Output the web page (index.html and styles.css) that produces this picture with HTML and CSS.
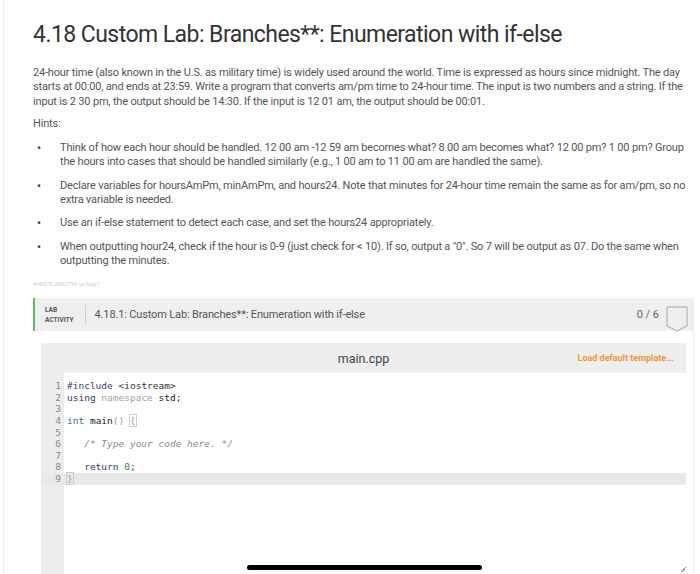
FILE: index.html
```html
<!DOCTYPE html>
<html lang="en">
<head>
<meta charset="utf-8">
<title>4.18 Custom Lab</title>
<link rel="stylesheet" href="styles.css">
</head>
<body>
<div class="page">
  <h1 class="title">4.18 Custom Lab: Branches**: Enumeration with if-else</h1>
  <p class="desc">24-hour time (also known in the U.S. as military time) is widely used around the world. Time is expressed as hours since midnight. The day starts at 00:00, and ends at 23:59. Write a program that converts am/pm time to 24-hour time. The input is two numbers and a string. If the input is 2 30 pm, the output should be 14:30. If the input is 12 01 am, the output should be 00:01.</p>
  <p class="hints">Hints:</p>
  <ul class="hint-list">
    <li>Think of how each hour should be handled. 12 00 am -12 59 am becomes what? 8 00 am becomes what? 12 00 pm? 1 00 pm? Group the hours into cases that should be handled similarly (e.g., 1 00 am to 11 00 am are handled the same).</li>
    <li>Declare variables for hoursAmPm, minAmPm, and hours24. Note that minutes for 24-hour time remain the same as for am/pm, so no extra variable is needed.</li>
    <li>Use an if-else statement to detect each case, and set the hours24 appropriately.</li>
    <li>When outputting hour24, check if the hour is 0-9 (just check for &lt; 10). If so, output a "0". So 7 will be output as 07. Do the same when outputting the minutes.</li>
  </ul>
  <div class="ref">448478.3062798.qx3zqy7</div>
  <section class="lab">
    <header class="lab-bar">
      <div class="lab-label">LAB<br>ACTIVITY</div>
      <div class="lab-title">4.18.1: Custom Lab: Branches**: Enumeration with if-else</div>
      <div class="lab-score">0 / 6</div>
      <svg class="badge" width="22" height="26" viewBox="0 0 22 26"><path d="M1 1 H21 V20 L11 25 L1 20 Z" fill="none" stroke="#a8a8a8" stroke-width="1"/></svg>
    </header>
    <div class="lab-body">
      <div class="editor">
        <div class="editor-head">
          <span class="file">main.cpp</span>
          <span class="load">Load default template...</span>
        </div>
        <div class="code">
          <div class="line"><span class="ln">1</span><span class="src"><span class="t-pre">#include</span> <span class="t-inc">&lt;iostream&gt;</span></span></div>
          <div class="line"><span class="ln">2</span><span class="src"><span class="t-kw">using</span> <span class="t-ns">namespace</span> <span class="t-id">std</span>;</span></div>
          <div class="line"><span class="ln">3</span><span class="src"></span></div>
          <div class="line"><span class="ln">4</span><span class="src"><span class="t-type">int</span> <span class="t-id">main</span><span class="t-paren">()</span> <span class="t-brace">{</span></span></div>
          <div class="line"><span class="ln">5</span><span class="src"></span></div>
          <div class="line"><span class="ln">6</span><span class="src">   <span class="t-cm">/* Type your code here. */</span></span></div>
          <div class="line"><span class="ln">7</span><span class="src"></span></div>
          <div class="line"><span class="ln">8</span><span class="src">   <span class="t-kw">return</span> <span class="t-num">0</span>;</span></div>
          <div class="line active"><span class="ln">9</span><span class="src"><span class="t-brace">}</span></span></div>
          <div class="filler"></div>
        </div>
      </div>
    </div>
  </section>
</div>
<div class="home-bar"></div>
<div class="grip"></div>
</body>
</html>
```
FILE: styles.css
```css
html, body {
  margin: 0;
  padding: 0;
  background: #ffffff;
  height: 100%;
  overflow: hidden;
}

body {
  font-family: Roboto, "Liberation Sans", sans-serif;
  color: #555;
}

.page {
  margin-left: 3px;
  border-left: 1px solid #ececec;
  padding: 0 6px 0 29px;
  min-height: 100%;
  box-sizing: border-box;
}

.title {
  margin: 0;
  padding-top: 21px;
  font-size: 23px;
  line-height: 28px;
  font-weight: 400;
  color: #333;
  letter-spacing: -0.55px;
}

.desc,
.hints,
.hint-list {
  font-size: 11px;
  line-height: 14.3px;
  color: #555;
  letter-spacing: -0.18px;
}

.desc {
  margin: 17px 0 0;
}

.hints {
  margin: 8px 0 0;
}

.hint-list {
  margin: 10px 0 0;
  padding-left: 0;
  list-style: none;
}

.hint-list li {
  display: flex;
  margin-bottom: 9px;
}

.hint-list li::before {
  content: "\2022";
  flex: none;
  width: 27px;
  padding-left: 4px;
  box-sizing: border-box;
  font-size: 12px;
  color: #444;
}

.ref {
  margin-top: 12px;
  font-size: 6px;
  line-height: 8px;
  color: #cfcfcf;
  letter-spacing: -0.1px;
}

.lab {
  margin-top: 10px;
  border-right: 1px solid #ececec;
}

.lab-bar {
  display: flex;
  align-items: center;
  height: 33px;
  background: #efefef;
  border-left: 2px solid #62b864;
  padding-left: 10px;
  padding-right: 5px;
}

.lab-label {
  font-size: 6.5px;
  line-height: 10px;
  font-weight: 700;
  color: #555;
  padding-right: 11px;
  border-right: 1px solid #cfcfcf;
  height: 20px;
  display: flex;
  flex-direction: column;
  justify-content: center;
  margin-right: 9px;
}

.lab-title {
  flex: 1;
  font-size: 11px;
  color: #555;
  letter-spacing: -0.15px;
}

.lab-score {
  font-size: 11px;
  color: #666;
  margin-right: 7px;
}

.badge {
  display: block;
  margin-top: 8px;
}

.lab-body {
  padding: 12px 7px 0 8px;
}

.editor {
  background: #fff;
}

.editor-head {
  position: relative;
  height: 30px;
  background: #eeeeee;
  display: flex;
  align-items: center;
  justify-content: center;
}

.file {
  font-size: 12.5px;
  color: #444;
}

.load {
  position: absolute;
  right: 12px;
  top: 10px;
  font-size: 9px;
  font-weight: 700;
  color: #f0983a;
}

.code {
  font-family: "DejaVu Sans Mono", "Liberation Mono", monospace;
  font-size: 9.5px;
  line-height: 11.6px;
  color: #333;
  padding-top: 7px;
  background: linear-gradient(to right, #ededed 0, #ededed 23px, #fff 23px);
}

.line {
  display: flex;
  height: 11.6px;
  white-space: pre;
}

.line.active {
  background: #e9e9e9;
}

.ln {
  width: 20px;
  text-align: right;
  color: #888;
  flex: none;
}

.src {
  padding-left: 6px;
}

.filler {
  height: 92px;
}

.t-pre { color: #3d3d7a; }
.t-inc { color: #333; }
.t-kw { color: #2d3c6e; }
.t-ns { color: #a3a3a3; }
.t-id { color: #222; }
.t-type { color: #30708e; }
.t-paren { color: #9a9a9a; }
.t-brace { color: #9a9a9a; outline: 1px solid #cccccc; }
.t-cm { color: #8a8a8a; font-style: italic; }
.t-num { color: #2e8b3a; }

.home-bar {
  position: absolute;
  left: 247px;
  top: 565px;
  width: 235px;
  height: 5px;
  border-radius: 3px;
  background: #000;
}

.grip {
  position: absolute;
  left: 681px;
  top: 567px;
  width: 5px;
  height: 5px;
  background: linear-gradient(135deg, transparent 45%, #888 45%, #888 60%, transparent 60%);
}
```
